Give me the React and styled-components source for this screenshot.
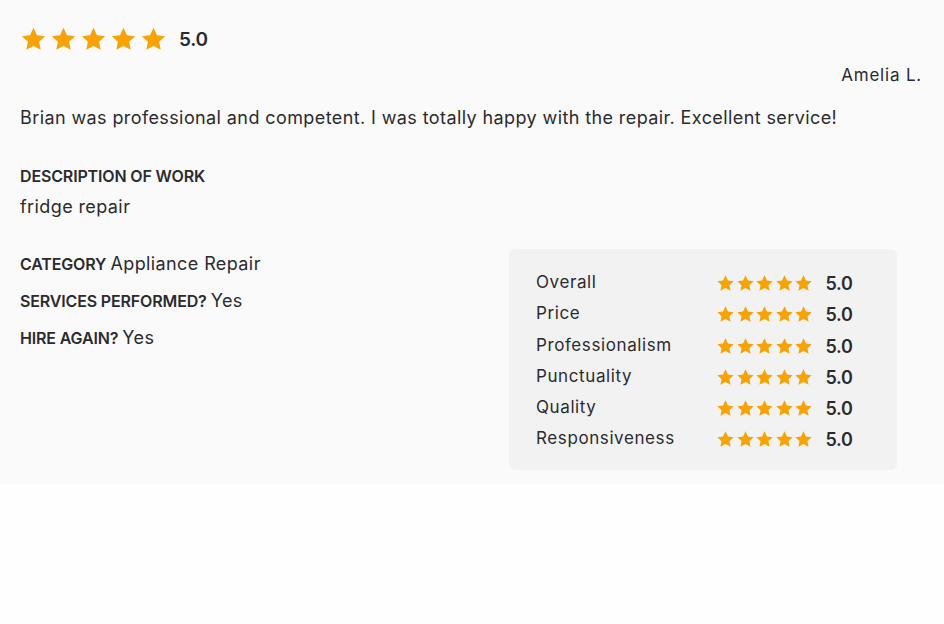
import React from 'react';
import styled, { createGlobalStyle } from 'styled-components';

const Global = createGlobalStyle`
  html, body {
    margin: 0;
    background: #fefefe;
  }
  body {
    font-family: Inter, "Liberation Sans", sans-serif;
    color: #2b2b2f;
  }
`;

const Card = styled.div`
  background: #fafafa;
  padding: 26px 22px 16px 20px;
  height: 484px;
  box-sizing: border-box;
`;

const TopRating = styled.div`
  display: flex;
  align-items: center;
  gap: 12px;
`;

const Stars = styled.div`
  display: flex;
  gap: ${p => p.$gap}px;
`;

const Score = styled.span`
  font-size: ${p => p.$size}px;
  font-weight: 600;
  color: #2b2b2f;
  letter-spacing: -0.3px;
`;

const Author = styled.div`
  text-align: right;
  font-size: 17px;
  margin-top: 12px;
  letter-spacing: 0.8px;
`;

const Body = styled.p`
  margin: 22px 0 0;
  font-size: 18px;
  letter-spacing: 0.4px;
`;

const Section = styled.div`
  margin-top: ${p => p.$top}px;
`;

const Label = styled.span`
  font-size: 16px;
  font-weight: 600;
  text-transform: uppercase;
  letter-spacing: -0.15px;
  margin-right: 4px;
`;

const Value = styled.span`
  font-size: 18px;
  letter-spacing: 0.4px;
`;

const ValueLine = styled.div`
  font-size: 18px;
  margin-top: 10px;
  letter-spacing: 0.4px;
`;

const Details = styled.div`
  display: grid;
  grid-template-columns: 489px 388px;
  margin-top: 34px;
`;

const Facts = styled.div`
  display: flex;
  flex-direction: column;
  gap: 16px;
  margin-top: 2px;
`;

const Panel = styled.div`
  margin-top: -2px;
  background: #f2f2f3;
  border-radius: 6px;
  padding: 23px 44px 18px 27px;
  display: flex;
  flex-direction: column;
  gap: 7.6px;
`;

const Row = styled.div`
  display: grid;
  grid-template-columns: 180px auto 1fr;
  align-items: center;
  height: 23.6px;
`;

const RowLabel = styled.span`
  font-size: 17px;
  letter-spacing: 0.6px;
  margin-top: -3px;
`;

const RowScore = styled(Score)`
  margin-left: 12px;
`;

const Star = ({ size }) => (
  <svg width={size} height={size} viewBox="0 0 24 24">
    <path
      fill="#f7a305"
      d="M12 1.6l3.1 6.6 7.2.9-5.3 5 1.4 7.1L12 17.7l-6.4 3.5L7 14.1l-5.3-5 7.2-.9z"
    />
  </svg>
);

const StarRow = ({ size, gap }) => (
  <Stars $gap={gap}>
    {[0, 1, 2, 3, 4].map(i => (
      <Star key={i} size={size} />
    ))}
  </Stars>
);

const ratings = ['Overall', 'Price', 'Professionalism', 'Punctuality', 'Quality', 'Responsiveness'];

export default function App() {
  return (
    <>
      <Global />
      <Card>
        <TopRating>
          <StarRow size={27} gap={3} />
          <Score $size={19}>5.0</Score>
        </TopRating>
        <Author>Amelia L.</Author>
        <Body>Brian was professional and competent. I was totally happy with the repair. Excellent service!</Body>
        <Section $top={38}>
          <Label>Description of work</Label>
          <ValueLine>fridge repair</ValueLine>
        </Section>
        <Details>
          <Facts>
            <div>
              <Label>Category</Label>
              <Value>Appliance Repair</Value>
            </div>
            <div>
              <Label>Services performed?</Label>
              <Value>Yes</Value>
            </div>
            <div>
              <Label>Hire again?</Label>
              <Value>Yes</Value>
            </div>
          </Facts>
          <Panel>
            {ratings.map(r => (
              <Row key={r}>
                <RowLabel>{r}</RowLabel>
                <StarRow size={19} gap={0.6} />
                <RowScore $size={18}>5.0</RowScore>
              </Row>
            ))}
          </Panel>
        </Details>
      </Card>
    </>
  );
}
